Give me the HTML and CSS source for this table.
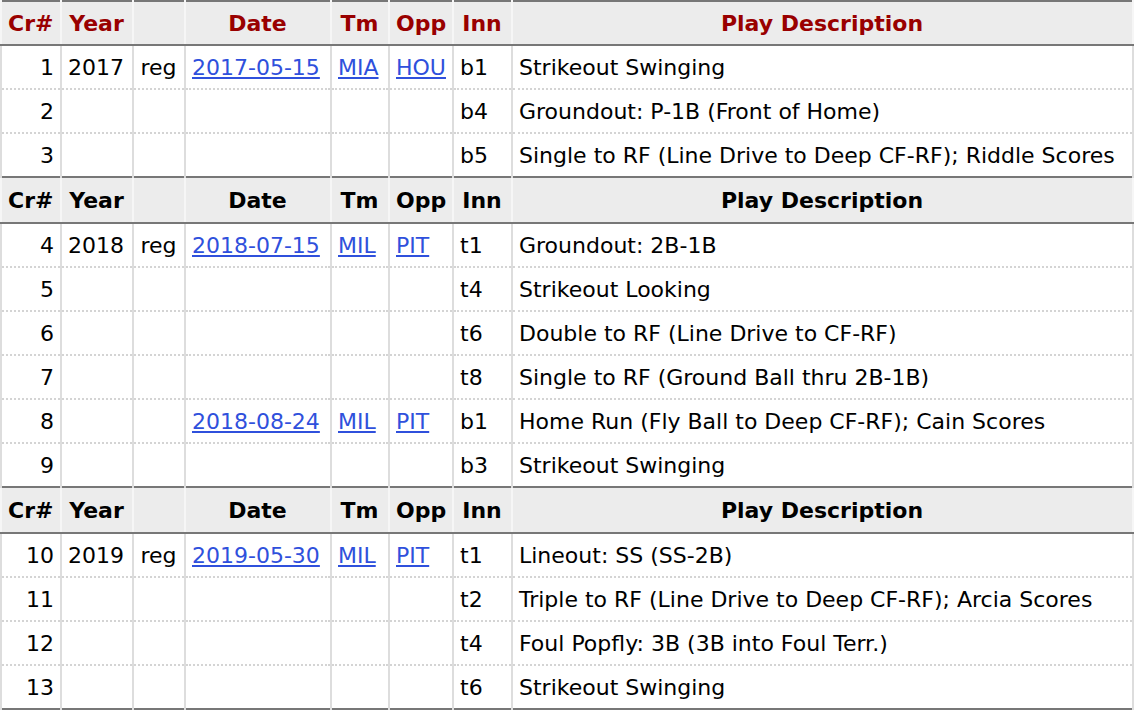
FILE: index.html
```html
<!DOCTYPE html>
<html>
<head>
<meta charset="utf-8">
<link rel="stylesheet" href="styles.css">
</head>
<body>
<table class="plays">
  <colgroup>
    <col class="c-cr"><col class="c-year"><col class="c-type"><col class="c-date"><col class="c-tm"><col class="c-opp"><col class="c-inn"><col class="c-desc">
  </colgroup>
  <thead>
    <tr class="head first">
      <th>Cr#</th><th>Year</th><th></th><th>Date</th><th>Tm</th><th>Opp</th><th>Inn</th><th>Play Description</th>
    </tr>
  </thead>
  <tbody>
    <tr><td class="num">1</td><td>2017</td><td class="ctr">reg</td><td><a href="#">2017-05-15</a></td><td><a href="#">MIA</a></td><td><a href="#">HOU</a></td><td>b1</td><td>Strikeout Swinging</td></tr>
    <tr><td class="num">2</td><td></td><td></td><td></td><td></td><td></td><td>b4</td><td>Groundout: P-1B (Front of Home)</td></tr>
    <tr><td class="num">3</td><td></td><td></td><td></td><td></td><td></td><td>b5</td><td>Single to RF (Line Drive to Deep CF-RF); Riddle Scores</td></tr>
    <tr class="head"><th>Cr#</th><th>Year</th><th></th><th>Date</th><th>Tm</th><th>Opp</th><th>Inn</th><th>Play Description</th></tr>
    <tr><td class="num">4</td><td>2018</td><td class="ctr">reg</td><td><a href="#">2018-07-15</a></td><td><a href="#">MIL</a></td><td><a href="#">PIT</a></td><td>t1</td><td>Groundout: 2B-1B</td></tr>
    <tr><td class="num">5</td><td></td><td></td><td></td><td></td><td></td><td>t4</td><td>Strikeout Looking</td></tr>
    <tr><td class="num">6</td><td></td><td></td><td></td><td></td><td></td><td>t6</td><td>Double to RF (Line Drive to CF-RF)</td></tr>
    <tr><td class="num">7</td><td></td><td></td><td></td><td></td><td></td><td>t8</td><td>Single to RF (Ground Ball thru 2B-1B)</td></tr>
    <tr><td class="num">8</td><td></td><td></td><td><a href="#">2018-08-24</a></td><td><a href="#">MIL</a></td><td><a href="#">PIT</a></td><td>b1</td><td>Home Run (Fly Ball to Deep CF-RF); Cain Scores</td></tr>
    <tr><td class="num">9</td><td></td><td></td><td></td><td></td><td></td><td>b3</td><td>Strikeout Swinging</td></tr>
    <tr class="head"><th>Cr#</th><th>Year</th><th></th><th>Date</th><th>Tm</th><th>Opp</th><th>Inn</th><th>Play Description</th></tr>
    <tr><td class="num">10</td><td>2019</td><td class="ctr">reg</td><td><a href="#">2019-05-30</a></td><td><a href="#">MIL</a></td><td><a href="#">PIT</a></td><td>t1</td><td>Lineout: SS (SS-2B)</td></tr>
    <tr><td class="num">11</td><td></td><td></td><td></td><td></td><td></td><td>t2</td><td>Triple to RF (Line Drive to Deep CF-RF); Arcia Scores</td></tr>
    <tr><td class="num">12</td><td></td><td></td><td></td><td></td><td></td><td>t4</td><td>Foul Popfly: 3B (3B into Foul Terr.)</td></tr>
    <tr><td class="num">13</td><td></td><td></td><td></td><td></td><td></td><td>t6</td><td>Strikeout Swinging</td></tr>
  </tbody>
</table>
</body>
</html>
```
FILE: styles.css
```css
html, body {
  margin: 0;
  padding: 0;
  background: #fff;
}
.plays {
  width: 1134px;
  table-layout: fixed;
  border-collapse: collapse;
  border: 2px solid #777;
  font-family: "DejaVu Sans", Verdana, sans-serif;
  font-size: 22px;
  color: #000;
}
.c-cr { width: 60px; }
.c-year { width: 72px; }
.c-type { width: 52px; }
.c-date { width: 146px; }
.c-tm { width: 58px; }
.c-opp { width: 64px; }
.c-inn { width: 59px; }
.c-desc { width: auto; }

.plays td, .plays th {
  padding: 0 7px 0 6px;
  white-space: nowrap;
  overflow: hidden;
  vertical-align: middle;
  border-left: 2px solid #ddd;
  border-right: 2px solid #ddd;
}
.plays td {
  height: 42px;
  border-bottom: 2px dotted #d4d4d4;
  text-align: left;
}
.plays td.num {
  text-align: right;
  padding-right: 6px;
}
.plays td.ctr {
  text-align: center;
}
.plays th {
  height: 42px;
  background: #ececec;
  font-weight: bold;
  text-align: center;
  color: #000;
  border-left-color: #f6f6f6;
  border-right-color: #f6f6f6;
  border-top: 2px solid #777;
  border-bottom: 2px solid #777;
}
.plays .first th {
  color: #990000;
  border-top: none;
}
.plays tbody .head th {
  height: 44px;
}
.plays a {
  color: #2f50dc;
  text-decoration: underline;
}
```
